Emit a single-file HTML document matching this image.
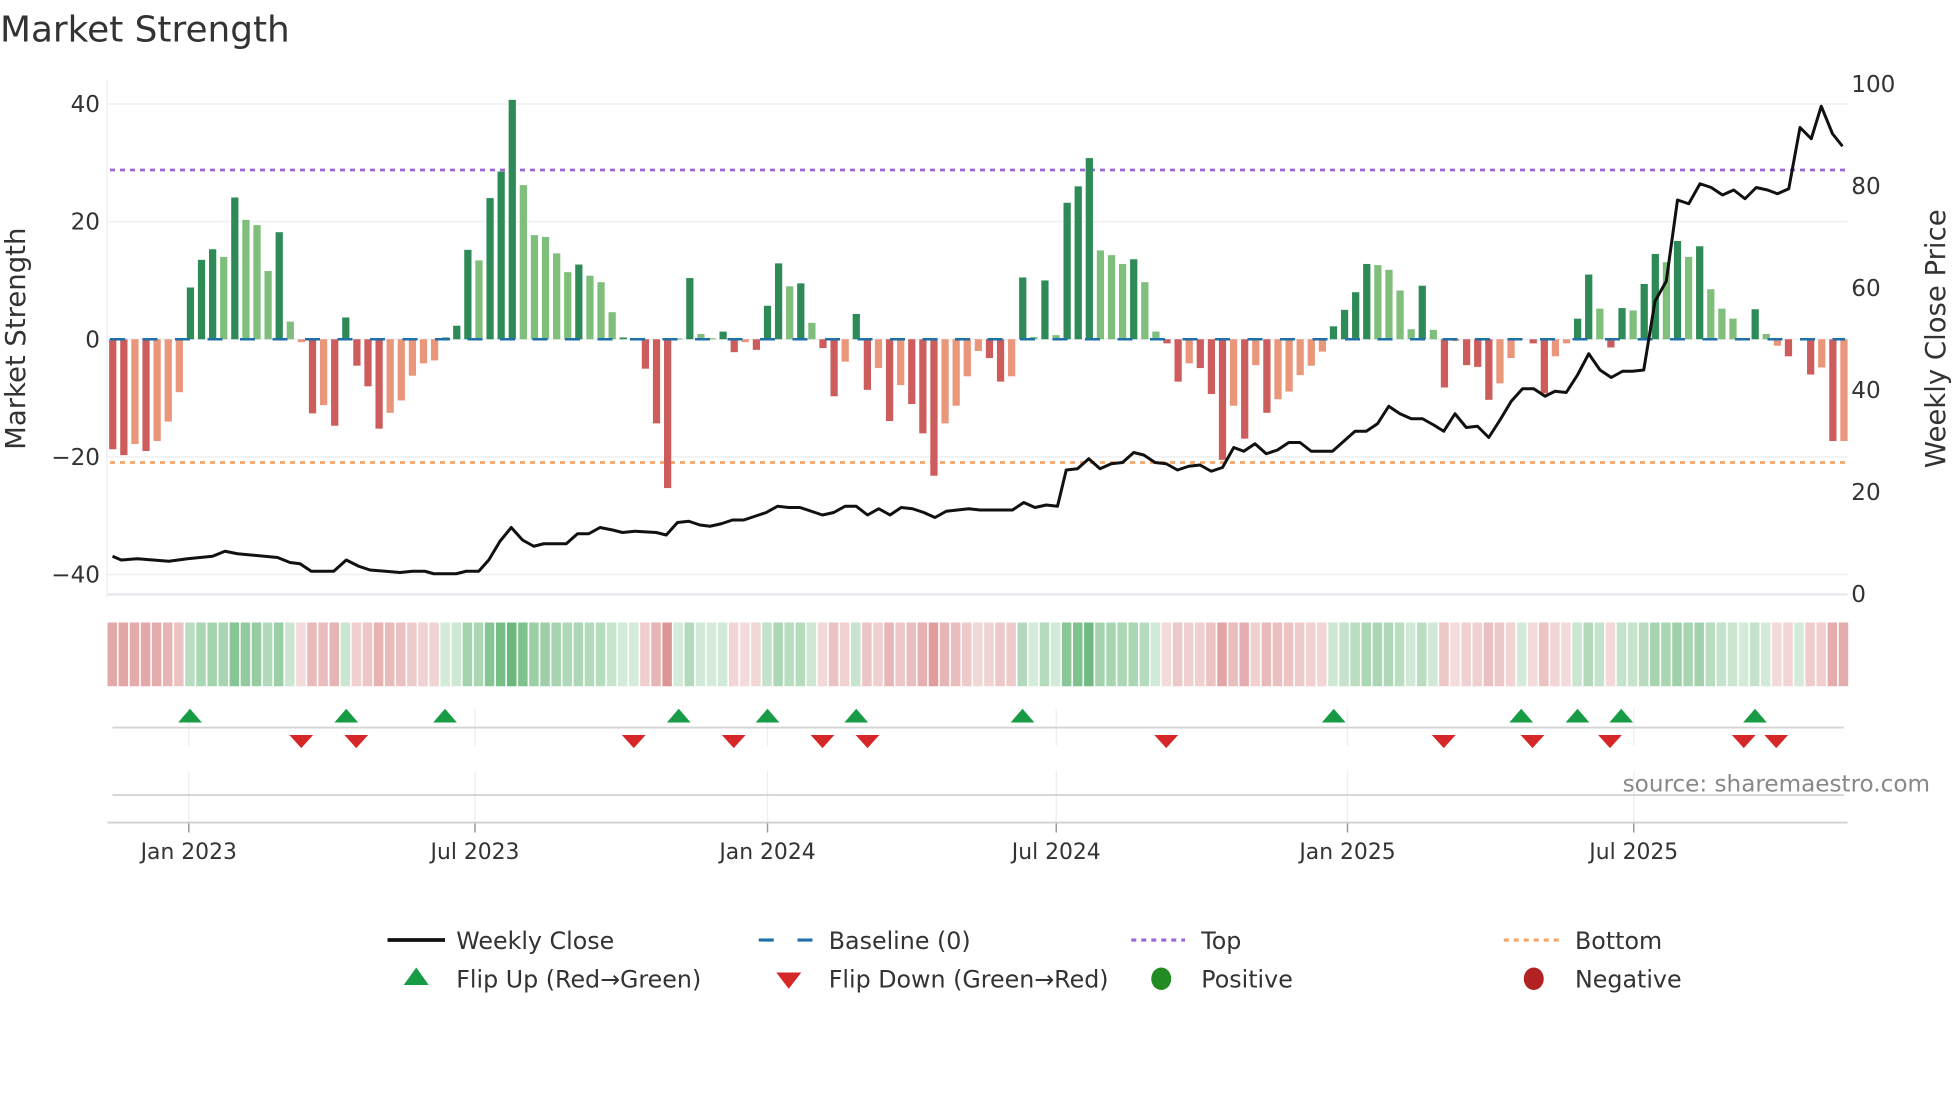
<!DOCTYPE html>
<html><head><meta charset="utf-8"><style>
html,body{margin:0;padding:0;background:#fff;}
svg{display:block;font-family:"DejaVu Sans","Liberation Sans",sans-serif;}
</style></head><body>
<svg id="s" width="1960" height="1102" viewBox="0 0 1568 881.6" xmlns="http://www.w3.org/2000/svg">
<text x="0" y="33" font-size="28.7" fill="#333">Market Strength</text>
<g id="grid"></g>
<g id="bars"></g>
<g id="strip"></g>
<g id="mk"></g>
<g id="txt" fill="#333" font-size="18.5"></g>
</svg>
<script>
var NS="http://www.w3.org/2000/svg";
function el(p,t,a,txt){var e=document.createElementNS(NS,t);for(var k in a)e.setAttribute(k,a[k]);if(txt!==undefined)e.textContent=txt;document.getElementById(p).appendChild(e);return e;}
var B=[["R",-18.7],["R",-19.7],["O",-17.8],["R",-19],["O",-17.3],["O",-14],["O",-9],["D",8.8],["D",13.5],["D",15.3],["L",14],["D",24.1],["L",20.3],["L",19.4],["L",11.6],["D",18.2],["L",3],["O",-0.5],["R",-12.6],["O",-11.2],["R",-14.7],["D",3.7],["R",-4.5],["R",-8],["R",-15.2],["O",-12.5],["O",-10.4],["O",-6.2],["O",-4.1],["O",-3.6],["D",0.3],["D",2.3],["D",15.2],["L",13.4],["D",24],["D",28.5],["D",40.7],["L",26.2],["L",17.7],["L",17.4],["L",14.6],
["L",11.4],["D",12.7],["L",10.8],["L",9.7],["L",4.6],["D",0.3],["D",0],["R",-5],["R",-14.3],["R",-25.3],["D",0.1],["D",10.4],["L",0.9],["L",0.2],["D",1.3],["R",-2.2],["O",-0.5],["R",-1.8],["D",5.7],["D",12.9],["L",9],["D",9.5],["L",2.8],["R",-1.5],["R",-9.7],["O",-3.8],["D",4.3],["R",-8.6],["O",-4.9],["R",-13.9],["O",-7.8],["R",-11],["R",-16],["R",-23.2],["O",-14.3],["O",-11.3],["O",-6.3],["O",-2],["R",-3.2],["R",-7.2],
["O",-6.3],["D",10.5],["L",0.4],["D",10],["L",0.7],["D",23.2],["D",26],["D",30.8],["L",15.1],["L",14.3],["L",12.8],["D",13.6],["L",9.7],["L",1.3],["R",-0.7],["R",-7.2],["O",-4.1],["R",-4.9],["R",-9.3],["R",-20.5],["O",-11.3],["R",-16.9],["O",-4.4],["R",-12.5],["O",-10.2],["O",-8.9],["O",-6.1],["O",-4.5],["O",-2.1],["D",2.2],["D",5],["D",8],["D",12.8],["L",12.6],["L",11.8],["L",8.3],["L",1.7],["D",9.1],["L",1.6],
["R",-8.2],["O",-0.3],["R",-4.4],["R",-4.7],["R",-10.3],["O",-7.5],["O",-3.2],["D",0],["R",-0.7],["R",-9.2],["O",-2.9],["O",-0.7],["D",3.5],["D",11],["L",5.2],["R",-1.4],["D",5.3],["L",4.9],["D",9.4],["D",14.5],["L",13.1],["D",16.7],["L",14],["D",15.8],["L",8.5],["L",5.2],["L",3.5],["D",0],["D",5.1],["L",0.9],["O",-1.1],["R",-2.9],["D",0],["R",-6],["O",-4.8],["R",-17.3],["O",-17.3]];
var C={D:"#2e8b57",L:"#7fbf7b",R:"#cd5c5c",O:"#e9967a"};
var X0=90.2,DX=8.878,Z=271.4,U=4.706;
[40,20,0,-20,-40].forEach(function(v){var y=Z-v*U;el("grid","line",{x1:86,x2:1478,y1:y,y2:y,stroke:"#eef0f3","stroke-width":1.2});
 el("txt","text",{x:80,y:y+6.5,"text-anchor":"end"},(v<0?"\u2212":"")+Math.abs(v));});
el("grid","line",{x1:85.5,x2:85.5,y1:64,y2:478,stroke:"#eef0f3","stroke-width":1.2});
el("grid","line",{x1:86,x2:1478,y1:475.5,y2:475.5,stroke:"#e6e9f2","stroke-width":2});
[[100,67.2],[80,148.8],[60,230.4],[40,312],[20,393.6],[0,475.2]].forEach(function(p){el("txt","text",{x:1481,y:p[1]+6.5},p[0]);});
el("grid","line",{x1:88,x2:1476,y1:136,y2:136,stroke:"#9b67d6","stroke-width":2.2,"stroke-dasharray":"4,4"});
el("grid","line",{x1:88,x2:1476,y1:370,y2:370,stroke:"#f4a56a","stroke-width":2.2,"stroke-dasharray":"4,4"});
B.forEach(function(b,i){var x=X0+DX*i,v=b[1],h=Math.abs(v)*U;if(h<0.3)return;
 el("bars","rect",{x:x-2.9,y:v>0?Z-h:Z,width:5.8,height:h,fill:C[b[0]]});});
el("bars","line",{x1:88,x2:1476,y1:Z,y2:Z,stroke:"#1f6fa8","stroke-width":2,"stroke-dasharray":"12,14"});
var P="90,445 97,448 110,447 135,449 150,447 170,445 180,441 190,443 222,446 232,450 240,451 249,457 267,457 277,448 287,453 296,456 320,458 330,457 340,457 347,459 365,459 373,457 383,457 391,448 400,433 409,422 418,432 427,437 435,435 453,435 462,427 471,427 480,422 490,424 498,426 508,425 525,426 533,428 542,418 551,417 560,420 568,421 577,419 586,416 595,416 604,413 613,410 622,405 631,406 640,406 649,409 658,412 667,410 676,405 685,405 694,412 703,407 712,412 721,406 730,407 739,410 748,414 757,409 766,408 775,407 784,408 810,408 819,402 828,406 837,404 846,405 853,376 862,375 871,367 880,375 889,371 898,370 907,362 915,364 924,370 933,371 942,376 951,373 960,372 969,377 978,374 987,358 995,361 1004,355 1013,363 1022,360 1031,354 1040,354 1049,361 1066,361 1075,353 1084,345 1093,345 1102,339 1111,325 1120,331 1129,335 1138,335 1147,340 1155,345 1164,331 1173,342 1182,341 1191,350 1200,336 1209,321 1218,311 1227,311 1236,317 1244,313 1253,314 1262,300 1271,283 1280,296 1289,302 1298,297 1306,297 1315,296 1324,241 1333,225 1342,160 1351,163 1360,147 1369,150 1378,156 1387,152 1396,159 1405,150 1414,152 1422,155 1431,151 1440,102 1449,111 1457,85 1466,107 1474,117";
el("bars","polyline",{points:P,fill:"none",stroke:"#111","stroke-width":2.4,"stroke-linejoin":"round"});
B.forEach(function(b,i){var x=X0+DX*i,v=b[1],a=Math.min(1,0.28+Math.abs(v)/45);
 var col=(b[0]=="D"||b[0]=="L")?"rgba(58,160,80,"+(a*0.75)+")":"rgba(205,100,100,"+(a*0.8)+")";
 el("strip","rect",{x:x-4.2,y:498,width:7.6,height:51,fill:col});});
var T=[[151,"Jan 2023"],[380,"Jul 2023"],[614,"Jan 2024"],[845,"Jul 2024"],[1078,"Jan 2025"],[1307,"Jul 2025"]];
T.forEach(function(t){el("mk","line",{x1:t[0],x2:t[0],y1:567,y2:597,stroke:"#eceef3","stroke-width":1});
 el("mk","line",{x1:t[0],x2:t[0],y1:617,y2:658,stroke:"#eceef3","stroke-width":1});
 el("mk","line",{x1:t[0],x2:t[0],y1:658,y2:666,stroke:"#999","stroke-width":1.2});
 el("txt","text",{x:t[0],y:687,"text-anchor":"middle","font-size":"17.5"},t[1]);});
el("mk","line",{x1:90,x2:1475,y1:582,y2:582,stroke:"#d4d4d4","stroke-width":1.5});
el("mk","line",{x1:90,x2:1475,y1:636,y2:636,stroke:"#d4d4d4","stroke-width":1.5});
el("mk","line",{x1:86,x2:1478,y1:658,y2:658,stroke:"#d0d0d0","stroke-width":1.5});
[152,277,356,543,614,685,818,1067,1217,1262,1297,1404].forEach(function(x){el("mk","path",{d:"M"+(x-9.5)+" 578L"+x+" 567L"+(x+9.5)+" 578Z",fill:"#179c45"});});
[241,285,507,587,658,694,933,1155,1226,1288,1395,1421].forEach(function(x){el("mk","path",{d:"M"+(x-9.5)+" 588L"+x+" 598.5L"+(x+9.5)+" 588Z",fill:"#d62728"});});
el("txt","text",{x:1544,y:633,"text-anchor":"end",fill:"#888","font-size":"18.5"},"source: sharemaestro.com");
el("txt","text",{transform:"translate(20,271) rotate(-90)","text-anchor":"middle","font-size":"22"},"Market Strength");
el("txt","text",{transform:"translate(1556,271) rotate(-90)","text-anchor":"middle","font-size":"22"},"Weekly Close Price");
el("mk","line",{x1:310,x2:356,y1:752,y2:752,stroke:"#111","stroke-width":3});
el("mk","line",{x1:607,x2:650,y1:752,y2:752,stroke:"#1f6fa8","stroke-width":2.5,"stroke-dasharray":"12,19"});
el("mk","line",{x1:905,x2:948,y1:752,y2:752,stroke:"#9b67d6","stroke-width":2.5,"stroke-dasharray":"4,4"});
el("mk","line",{x1:1203,x2:1247,y1:752,y2:752,stroke:"#f4a56a","stroke-width":2.5,"stroke-dasharray":"4,4"});
el("mk","path",{d:"M323 788L333 774L343 788Z",fill:"#179c45"});
el("mk","path",{d:"M621 778L631 791L641 778Z",fill:"#d62728"});
el("mk","ellipse",{cx:929,cy:783,rx:8,ry:9,fill:"#228b22"});
el("mk","ellipse",{cx:1227,cy:783,rx:8,ry:9,fill:"#b22222"});
[[365,759,"Weekly Close"],[663,759,"Baseline (0)"],[961,759,"Top"],[1260,759,"Bottom"],[365,790,"Flip Up (Red\u2192Green)"],[663,790,"Flip Down (Green\u2192Red)"],[961,790,"Positive"],[1260,790,"Negative"]].forEach(function(t){el("txt","text",{x:t[0],y:t[1],"font-size":"19"},t[2]);});
</script>
</body></html>
